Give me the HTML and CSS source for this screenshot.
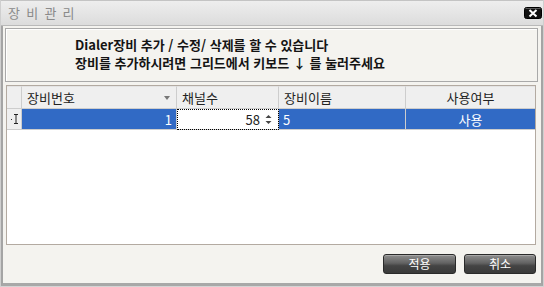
FILE: index.html
```html
<!DOCTYPE html>
<html lang="ko">
<head>
  <meta charset="UTF-8" />
  <title>장비 관리</title>
  <link rel="stylesheet" href="styles.css">
</head>
<body>
  <div class="window">
    <div class="titlebar">
      <span class="title">장 비 관 리</span>
      <button class="close" type="button" aria-label="닫기">
        <svg width="18" height="12" viewBox="0 0 18 12">
          <rect x="0.5" y="0.5" width="17" height="11" rx="2" fill="#111" stroke="#000"/>
          <line x1="1.5" y1="1.5" x2="16.5" y2="1.5" stroke="#5a5a5a"/>
          <path d="M5.5 3 L12.5 9.5 M12.5 3 L5.5 9.5" stroke="#fff" stroke-width="2"/>
        </svg>
      </button>
    </div>

    <div class="main">
      <div class="notice">
        <p>Dialer장비 추가 / 수정/ 삭제를 할 수 있습니다</p>
        <p>장비를 추가하시려면 그리드에서 키보드 <span class="arrow">↓</span> 를 눌러주세요</p>
      </div>

      <div class="grid">
        <div class="row head">
          <div class="cell rowhdr"></div>
          <div class="cell">
            <span>장비번호</span>
            <svg class="sort" width="6" height="4" viewBox="0 0 6 4"><path d="M0 0 H6 L3 4 Z" fill="#777"/></svg>
          </div>
          <div class="cell">채널수</div>
          <div class="cell">장비이름</div>
          <div class="cell center last">사용여부</div>
        </div>
        <div class="row data">
          <div class="cell rowhdr">
            <svg width="8" height="12" viewBox="0 0 8 12">
              <rect x="0" y="6" width="1" height="1" fill="#333"/>
              <path d="M3 1.5 H7 M5 1.5 V10.5 M3 10.5 H7" stroke="#222" fill="none"/>
            </svg>
          </div>
          <div class="cell sel right">1</div>
          <div class="cell edit">
            <span class="num">58</span>
            <svg class="spin" width="7" height="11" viewBox="0 0 7 11">
              <path d="M0.5 4 L3.5 1 L6.5 4 Z" fill="#444"/>
              <path d="M0.5 7 L3.5 10 L6.5 7 Z" fill="#444"/>
            </svg>
          </div>
          <div class="cell sel">5</div>
          <div class="cell sel center last">사용</div>
        </div>
      </div>

      <div class="actions">
        <button type="button" class="btn apply">적용</button>
        <button type="button" class="btn cancel">취소</button>
      </div>
    </div>
  </div>
</body>
</html>
```

FILE: styles.css
```css
html, body {
  margin: 0;
  padding: 0;
}

body {
  width: 544px;
  height: 287px;
  overflow: hidden;
  font-family: "Noto Sans CJK KR", "Noto Sans", sans-serif;
  background: #f4f3ef;
}

.window {
  box-sizing: border-box;
  width: 544px;
  height: 287px;
  display: flex;
  flex-direction: column;
  border-left: 1px solid #cfcfcf;
  border-right: 1px solid #cfcfcf;
  border-bottom: 1px solid #d4d4d4;
}

.titlebar {
  box-sizing: border-box;
  height: 26px;
  display: flex;
  align-items: center;
  justify-content: space-between;
  background: linear-gradient(#eeeeee, #dcdcdc);
  border-top: 1px solid #c4c4c4;
  border-bottom: 1px solid #b9b9b9;
  padding: 0 1px 1px 7px;
}

.title {
  font-size: 13px;
  color: #8a8a8a;
  letter-spacing: 1.3px;
}

.close {
  border: none;
  background: none;
  padding: 0;
  margin: 0;
  width: 18px;
  height: 12px;
  display: block;
}

.close svg {
  display: block;
}

.main {
  flex: 1;
  display: flex;
  flex-direction: column;
  border-left: 2px solid #a4a4a4;
  border-right: 2px solid #a4a4a4;
  border-bottom: 3px solid #a8a8a8;
}

.notice {
  box-sizing: border-box;
  height: 54px;
  margin: 2px 3px 0 2px;
  padding: 7px 0 0 69px;
  border: 1px solid #a9a9a9;
  box-shadow: inset 1px 1px 0 #ffffff;
  background: #f4f3ef;
}

.notice p {
  margin: 0;
  line-height: 18px;
  font-size: 13px;
  font-weight: bold;
  color: #141414;
}

.grid {
  box-sizing: border-box;
  height: 160px;
  margin: 3px 5px 0 3px;
  border: 1px solid #b3aaa1;
  background: #ffffff;
}

.row {
  display: grid;
  grid-template-columns: 15px 155px 102px 127px 129px;
}

.cell {
  box-sizing: border-box;
  display: flex;
  align-items: center;
  padding: 0 5px;
  font-size: 13px;
  color: #222;
  border-right: 1px solid #cdcdcd;
  border-bottom: 1px solid #cdcdcd;
  white-space: nowrap;
}

.cell.last {
  border-right: none;
}

.head .cell {
  height: 23px;
  background: #efefef;
  border-top: 1px solid #e4e4e4;
}

.head .cell .sort {
  margin-left: auto;
  margin-right: 1px;
}

.data .cell {
  height: 21px;
}

.rowhdr {
  background: #efefef;
  padding: 0 0 0 4px;
}

.data .rowhdr svg {
  display: block;
}

.center {
  justify-content: center;
}

.right {
  justify-content: flex-end;
  padding-right: 4px;
}

.sel {
  background: #316ac5;
  color: #ffffff;
}

.sel:not(.right):not(.center) {
  padding-left: 4px;
}

.edit {
  background: #ffffff;
  outline: 1px dotted #000;
  outline-offset: -1px;
  justify-content: flex-end;
  padding-right: 6px;
}

.edit .num {
  margin-right: 5px;
}

.spin {
  display: block;
}

.actions {
  display: flex;
  justify-content: flex-end;
  gap: 8px;
  margin: 9px 5px 0 0;
}

.btn {
  box-sizing: border-box;
  height: 20px;
  padding: 0;
  border: 1px solid #2a2a2a;
  border-radius: 3px;
  background: linear-gradient(#8e8e8e, #626262 45%, #444444 60%, #3a3a3a);
  box-shadow: inset 0 1px 0 #a8a8a8;
  color: #ffffff;
  font-family: "Noto Sans CJK KR", "Noto Sans", sans-serif;
  font-size: 12px;
  line-height: 18px;
}

.apply {
  width: 73px;
}

.cancel {
  width: 72px;
}
```
